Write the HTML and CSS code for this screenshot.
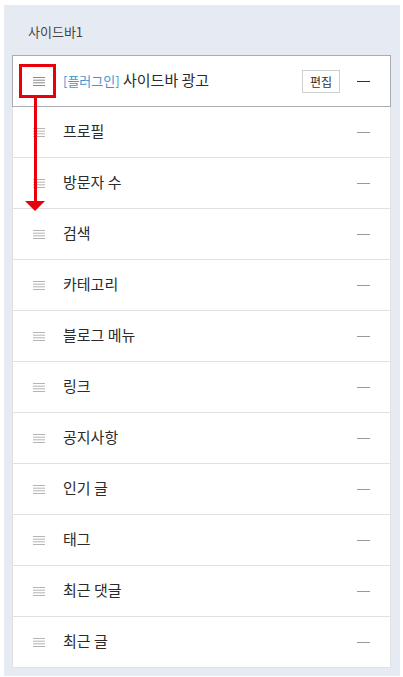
FILE: index.html
```html
<!DOCTYPE html>
<html>
  <head>
    <title>사이드바 설정</title>
    <link rel="stylesheet" href="styles.css">
  </head>
  <body>
    <div class="sidebar-panel">
      <p class="sidebar-title">사이드바1</p>
      <ul class="widget-list">
        <li class="widget-item selected">
          <span class="drag-handle">
            <svg width="12" height="9" viewBox="0 0 12 9"><path d="M0 0.5H12M0 3.2H12M0 5.8H12M0 8.5H12" stroke="#8c8c8c" stroke-width="1"/></svg>
          </span>
          <span class="widget-name"><span class="plugin-tag">[플러그인]</span> 사이드바 광고</span>
          <span class="btn-edit">편집</span>
          <span class="btn-remove"></span>
          <div class="drag-mark"></div>
          <div class="drag-arrow"></div>
        </li>
        <li class="widget-item"><span class="drag-handle"><svg width="12" height="9" viewBox="0 0 12 9"><path d="M0 0.5H12M0 3.2H12M0 5.8H12M0 8.5H12" stroke="#b4b4b4" stroke-width="1"/></svg></span><span class="widget-name">프로필</span><span class="btn-remove"></span></li>
        <li class="widget-item"><span class="drag-handle"><svg width="12" height="9" viewBox="0 0 12 9"><path d="M0 0.5H12M0 3.2H12M0 5.8H12M0 8.5H12" stroke="#b4b4b4" stroke-width="1"/></svg></span><span class="widget-name">방문자 수</span><span class="btn-remove"></span></li>
        <li class="widget-item"><span class="drag-handle"><svg width="12" height="9" viewBox="0 0 12 9"><path d="M0 0.5H12M0 3.2H12M0 5.8H12M0 8.5H12" stroke="#b4b4b4" stroke-width="1"/></svg></span><span class="widget-name">검색</span><span class="btn-remove"></span></li>
        <li class="widget-item"><span class="drag-handle"><svg width="12" height="9" viewBox="0 0 12 9"><path d="M0 0.5H12M0 3.2H12M0 5.8H12M0 8.5H12" stroke="#b4b4b4" stroke-width="1"/></svg></span><span class="widget-name">카테고리</span><span class="btn-remove"></span></li>
        <li class="widget-item"><span class="drag-handle"><svg width="12" height="9" viewBox="0 0 12 9"><path d="M0 0.5H12M0 3.2H12M0 5.8H12M0 8.5H12" stroke="#b4b4b4" stroke-width="1"/></svg></span><span class="widget-name">블로그 메뉴</span><span class="btn-remove"></span></li>
        <li class="widget-item"><span class="drag-handle"><svg width="12" height="9" viewBox="0 0 12 9"><path d="M0 0.5H12M0 3.2H12M0 5.8H12M0 8.5H12" stroke="#b4b4b4" stroke-width="1"/></svg></span><span class="widget-name">링크</span><span class="btn-remove"></span></li>
        <li class="widget-item"><span class="drag-handle"><svg width="12" height="9" viewBox="0 0 12 9"><path d="M0 0.5H12M0 3.2H12M0 5.8H12M0 8.5H12" stroke="#b4b4b4" stroke-width="1"/></svg></span><span class="widget-name">공지사항</span><span class="btn-remove"></span></li>
        <li class="widget-item"><span class="drag-handle"><svg width="12" height="9" viewBox="0 0 12 9"><path d="M0 0.5H12M0 3.2H12M0 5.8H12M0 8.5H12" stroke="#b4b4b4" stroke-width="1"/></svg></span><span class="widget-name">인기 글</span><span class="btn-remove"></span></li>
        <li class="widget-item"><span class="drag-handle"><svg width="12" height="9" viewBox="0 0 12 9"><path d="M0 0.5H12M0 3.2H12M0 5.8H12M0 8.5H12" stroke="#b4b4b4" stroke-width="1"/></svg></span><span class="widget-name">태그</span><span class="btn-remove"></span></li>
        <li class="widget-item"><span class="drag-handle"><svg width="12" height="9" viewBox="0 0 12 9"><path d="M0 0.5H12M0 3.2H12M0 5.8H12M0 8.5H12" stroke="#b4b4b4" stroke-width="1"/></svg></span><span class="widget-name">최근 댓글</span><span class="btn-remove"></span></li>
        <li class="widget-item"><span class="drag-handle"><svg width="12" height="9" viewBox="0 0 12 9"><path d="M0 0.5H12M0 3.2H12M0 5.8H12M0 8.5H12" stroke="#b4b4b4" stroke-width="1"/></svg></span><span class="widget-name">최근 글</span><span class="btn-remove"></span></li>
      </ul>
    </div>
  </body>
</html>
```

FILE: styles.css
```css
body {
  margin: 0;
  background-color: #fff;
  font-family: "Noto Sans CJK KR", "Noto Sans", sans-serif;
  color: #333;
}
.sidebar-panel {
  margin: 5px 3px 0 4px;
  padding: 0 9px 8px 8px;
  background-color: #e6ebf3;
}
.sidebar-title {
  margin: 0;
  padding: 3px 0 0 16px;
  height: 47px;
  line-height: 47px;
  font-size: 13px;
  color: #444;
}
.widget-list {
  list-style: none;
  margin: 0;
  padding: 0;
}
.widget-item {
  position: relative;
  display: flex;
  flex-flow: row nowrap;
  align-items: center;
  height: 50px;
  margin-top: -1px;
  border: 1px solid #e1e1e1;
  background-color: #fff;
}
.widget-item:first-child {
  margin-top: 0;
}
.widget-item.selected {
  z-index: 1;
  border-color: #a9adb3;
}
.drag-handle {
  display: flex;
  width: 12px;
  margin: 0 18px 0 20px;
}
.widget-name {
  flex: 1;
  margin-bottom: 3px;
  font-size: 15px;
  color: #2b2b2b;
}
.plugin-tag {
  font-size: 13px;
  color: #3c98d2;
}
.btn-edit {
  width: 36px;
  height: 21px;
  line-height: 21px;
  text-align: center;
  border: 1px solid #cfcfcf;
  font-size: 12px;
  color: #333;
  margin-right: 17px;
}
.btn-remove {
  width: 13px;
  height: 1px;
  margin-right: 20px;
  background-color: #999;
}
.selected .btn-remove {
  background-color: #333;
}
.drag-mark {
  position: absolute;
  left: 6px;
  top: 8px;
  width: 31px;
  height: 28px;
  border: 3px solid #e8000b;
}
.drag-arrow {
  position: absolute;
  left: 21px;
  top: 42px;
  width: 3px;
  height: 103px;
  background-color: #e8000b;
  z-index: 2;
}
.drag-arrow::after {
  content: "";
  position: absolute;
  left: -9px;
  bottom: -10px;
  border-left: 10.5px solid transparent;
  border-right: 10.5px solid transparent;
  border-top: 10px solid #e8000b;
}
```
